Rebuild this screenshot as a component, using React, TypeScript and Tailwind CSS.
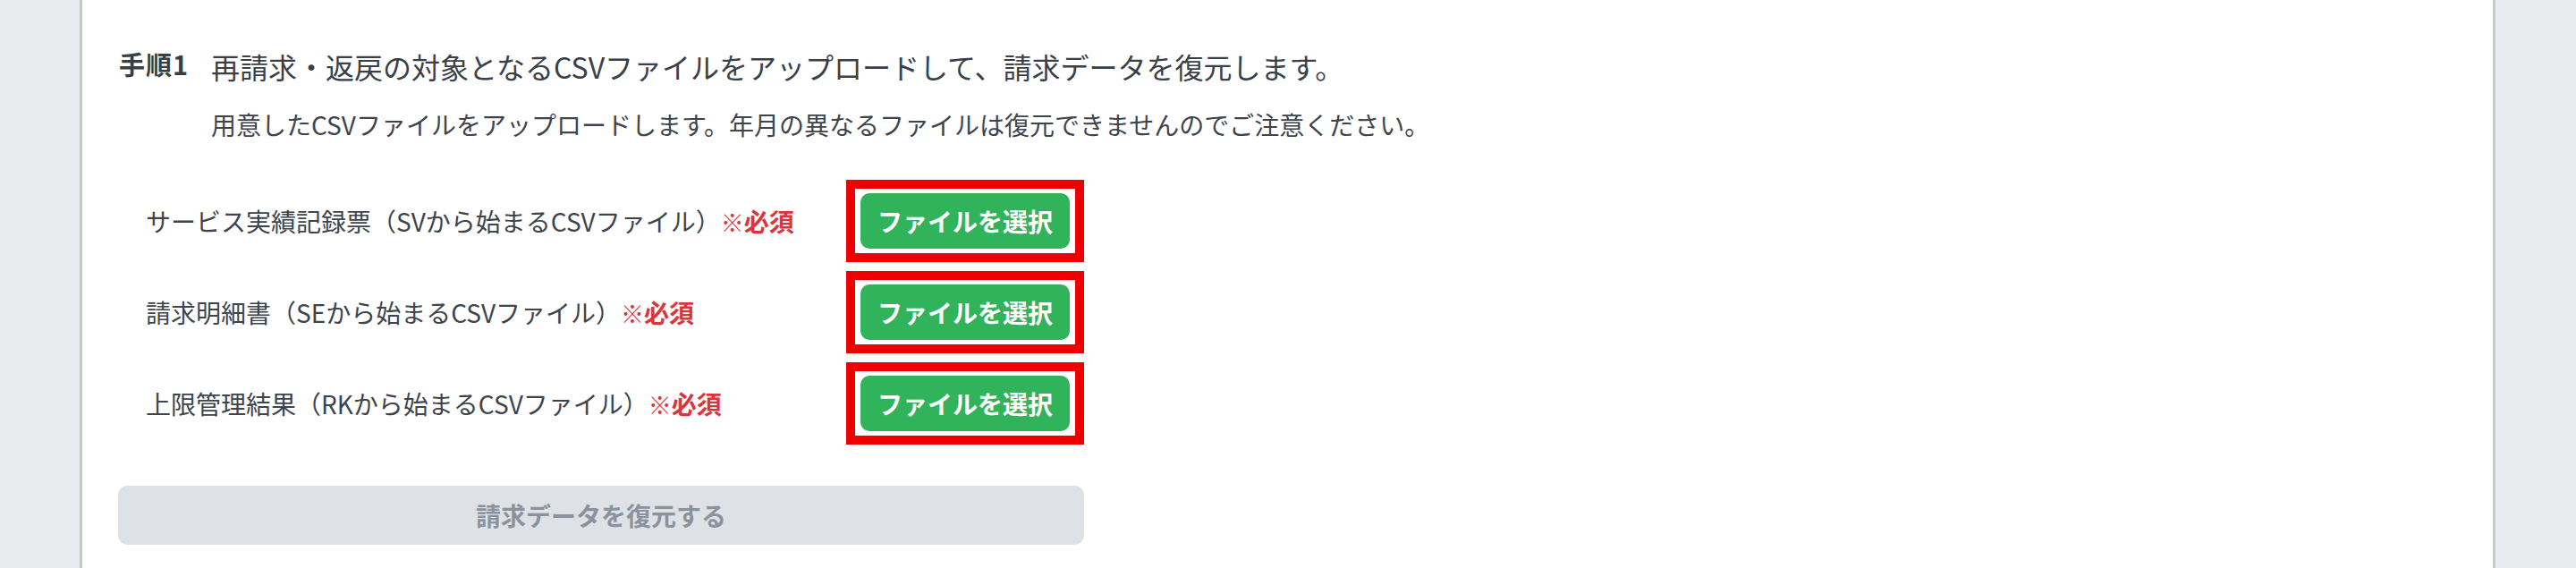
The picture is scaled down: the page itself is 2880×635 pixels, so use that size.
import React from "react";

const rows = [
  "サービス実績記録票（SVから始まるCSVファイル）",
  "請求明細書（SEから始まるCSVファイル）",
  "上限管理結果（RKから始まるCSVファイル）",
];

function FileRow({ label }: { label: string }) {
  return (
    <div className="flex items-center">
      <div className="w-[814px] pl-[31px] text-[28px] leading-[1.5] text-[#3d444c]">
        {label}
        <span className="font-bold text-[#d9363e]">
          <span className="text-[26px]">※</span>必須
        </span>
      </div>
      <div className="border-[10px] border-[#ee0000] bg-white px-[6px] py-[5px]">
        <button className="flex h-[62px] w-[234px] items-center justify-center rounded-[10px] bg-[#30b35b] text-[28px] font-bold text-white">
          ファイルを選択
        </button>
      </div>
    </div>
  );
}

export default function App() {
  return (
    <div
      className="flex h-[635px] w-full overflow-hidden bg-[#e7ebee]"
      style={{ fontFamily: '"Noto Sans CJK JP", "Noto Sans", sans-serif' }}
    >
      <div className="ml-[89px] mr-[90px] flex-1 border-x-[3px] border-[#c4c9ce] bg-white pl-[40px] pt-[50px]">
        <div className="flex items-start">
          <div className="w-[104px] pl-[1px] text-[29px] font-bold leading-[1.5] tracking-[1px] text-[#3a3f45]">
            手順1
          </div>
          <div className="text-[32px] leading-[1.5] text-[#3a4048]">
            再請求・返戻の対象となるCSVファイルをアップロードして、請求データを復元します。
          </div>
        </div>
        <p className="ml-[104px] mt-[20px] text-[28px] leading-[1.5] text-[#3d444c]">
          用意したCSVファイルをアップロードします。年月の異なるファイルは復元できませんのでご注意ください。
        </p>
        <div className="mt-[41px] flex flex-col gap-[10px]">
          {rows.map((r) => (
            <FileRow key={r} label={r} />
          ))}
        </div>
        <button
          disabled
          className="mt-[46px] flex h-[66px] w-[1080px] items-center justify-center rounded-[10px] bg-[#dee2e6] text-[28px] font-bold text-[#8a939d]"
        >
          請求データを復元する
        </button>
      </div>
    </div>
  );
}
